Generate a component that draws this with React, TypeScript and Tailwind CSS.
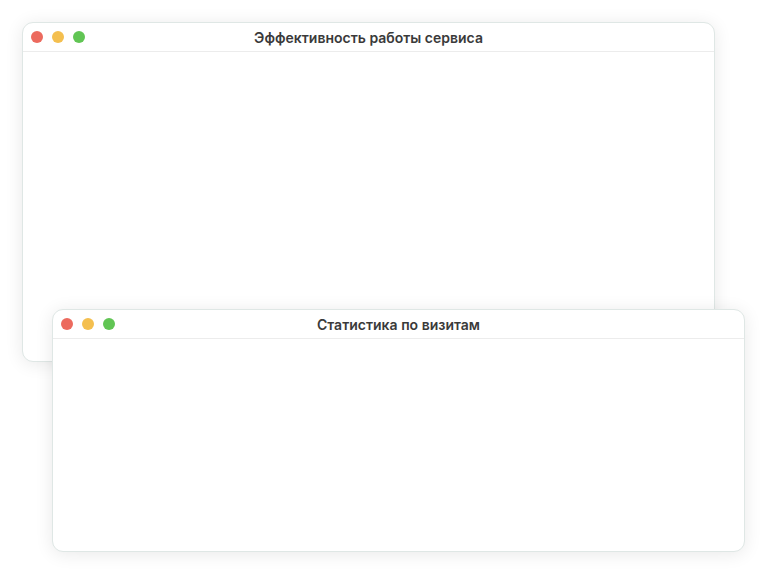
const font = { fontFamily: 'Inter, "Noto Sans", sans-serif' };

function Window({ title, className }: { title: string; className: string }) {
  return (
    <div
      className={`absolute flex flex-col overflow-hidden rounded-[11px] border border-[#dfe7e5] bg-white shadow-[0_2px_18px_rgba(0,0,0,0.09)] ${className}`}
    >
      <div className="relative flex h-[29px] shrink-0 items-center border-b border-[#ececec] px-[8px]">
        <div className="flex items-center gap-[9px]">
          <span className="h-[12px] w-[12px] rounded-full bg-[#ec6a5e]" />
          <span className="h-[12px] w-[12px] rounded-full bg-[#f4bf4f]" />
          <span className="h-[12px] w-[12px] rounded-full bg-[#61c554]" />
        </div>
        <div className="absolute inset-0 flex items-center justify-center text-[14px] font-semibold text-[#3a3a3a]">
          {title}
        </div>
      </div>
      <div className="flex-1" />
    </div>
  );
}

export default function App() {
  return (
    <div className="relative h-[573px] w-[766px] overflow-hidden bg-white" style={font}>
      <Window title="Эффективность работы сервиса" className="left-[22px] top-[22px] h-[340px] w-[693px]" />
      <Window title="Статистика по визитам" className="left-[52px] top-[309px] h-[243px] w-[693px]" />
    </div>
  );
}
